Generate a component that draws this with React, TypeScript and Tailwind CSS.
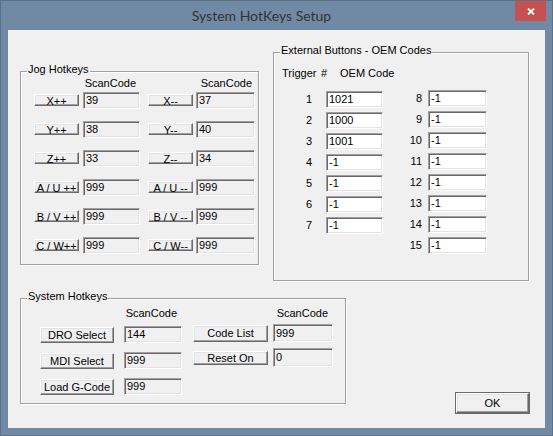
const btn =
  "box-border border border-t-white border-l-white border-r-[#696969] border-b-[#696969] bg-[#f0f0f0] shadow-[inset_-1px_-1px_0_#a0a0a0,inset_1px_1px_0_#e3e3e3] text-[11px] text-black overflow-hidden";
const edit =
  "box-border border border-t-[#a0a0a0] border-l-[#a0a0a0] border-r-white border-b-white shadow-[inset_1px_1px_0_#696969,inset_-1px_-1px_0_#e3e3e3] text-[11px] leading-[13px] text-black pl-[2px] flex items-center";

const jogRows = [
  ["X++", "39", "X--", "37"],
  ["Y++", "38", "Y--", "40"],
  ["Z++", "33", "Z--", "34"],
  ["A / U ++", "999", "A / U --", "999"],
  ["B / V ++", "999", "B / V --", "999"],
  ["C / W++", "999", "C / W--", "999"],
];

const oemLeft = [
  ["1", "1021"],
  ["2", "1000"],
  ["3", "1001"],
  ["4", "-1"],
  ["5", "-1"],
  ["6", "-1"],
  ["7", "-1"],
];

const oemRight = [
  ["8", "-1"],
  ["9", "-1"],
  ["10", "-1"],
  ["11", "-1"],
  ["12", "-1"],
  ["13", "-1"],
  ["14", "-1"],
  ["15", "-1"],
];

function GroupBox({
  title,
  className,
  children,
}: {
  title: string;
  className: string;
  children: React.ReactNode;
}) {
  return (
    <div
      className={`relative box-border border border-[#a0a0a0] shadow-[inset_1px_1px_0_#fff,1px_1px_0_#fff] ${className}`}
    >
      {/* Group caption sits on the top line */}
      <span className="absolute -top-[9px] left-[6px] bg-[#f0f0f0] px-[1px] text-[11px] leading-[13px] whitespace-nowrap">
        {title}
      </span>
      {children}
    </div>
  );
}

export default function App() {
  return (
    <div className="box-border flex h-[436px] w-[553px] flex-col border border-[#5b7088] bg-[#7089a4] font-['Liberation_Sans',Arial,sans-serif] text-black">
      {/* Title bar */}
      <div className="flex h-[29px] items-start">
        <div className="flex flex-1 justify-center pl-[7px] pt-[5px] font-['Lato','Noto_Sans',sans-serif] text-[14px] leading-[20px] text-[#333]">
          System HotKeys Setup
        </div>
        <div className="mr-[6px] flex h-[20px] w-[31px] items-center justify-center bg-[#c75050]">
          <svg width="8" height="7" viewBox="0 0 8 7">
            <path d="M1 0.5 L7 6.5 M7 0.5 L1 6.5" stroke="#fff" strokeWidth="1.8" />
          </svg>
        </div>
      </div>

      {/* Client area */}
      <div className="mx-[7px] flex h-[398px] w-[537px] flex-col bg-[#f0f0f0] pl-[12px] pt-[22px] text-[11px] leading-[13px]">
        <div className="flex items-start">
          {/* Jog hotkeys */}
          <GroupBox title="Jog Hotkeys" className="mt-[19px] h-[194px] w-[239px]">
            <div className="flex pl-[13px] pt-[5px]">
              <div className="w-[106px] pr-[4px] text-right">ScanCode</div>
              <div className="ml-[8px] w-[107px] pr-[3px] text-right">ScanCode</div>
            </div>
            <div className="mt-[2px] flex flex-col gap-[12px] pl-[13px]">
              {jogRows.map((r) => (
                <div key={r[0]} className="flex h-[17px] items-start">
                  <div className={`${btn} mt-[2px] h-[12px] w-[45px] text-center leading-[12px] whitespace-nowrap`}>
                    {r[0]}
                  </div>
                  <div className={`${edit} ml-[4px] h-[17px] w-[57px] bg-[#f0f0f0]`}>{r[1]}</div>
                  <div className={`${btn} ml-[8px] mt-[2px] h-[12px] w-[45px] text-center leading-[12px] whitespace-nowrap`}>
                    {r[2]}
                  </div>
                  <div className={`${edit} ml-[3px] h-[17px] w-[59px] bg-[#f0f0f0]`}>{r[3]}</div>
                </div>
              ))}
            </div>
          </GroupBox>

          {/* External buttons */}
          <GroupBox title="External Buttons - OEM Codes" className="ml-[14px] h-[229px] w-[256px]">
            <div className="flex pl-[8px] pt-[14px]">
              <span className="w-[39px]">Trigger</span>
              <span className="w-[19px]">#</span>
              <span>OEM Code</span>
            </div>
            <div className="mt-[10px] flex items-start">
              <div className="mt-[1px] flex flex-col gap-[4px]">
                {oemLeft.map(([n, v]) => (
                  <div key={n} className="flex h-[17px] items-center">
                    <span className="w-[38px] text-right">{n}</span>
                    <div className={`${edit} ml-[14px] h-[17px] w-[57px] bg-white`}>{v}</div>
                  </div>
                ))}
              </div>
              <div className="ml-[9px] flex flex-col gap-[4px]">
                {oemRight.map(([n, v]) => (
                  <div key={n} className="flex h-[17px] items-center">
                    <span className="w-[30px] text-right">{n}</span>
                    <div className={`${edit} ml-[6px] h-[17px] w-[59px] bg-white`}>{v}</div>
                  </div>
                ))}
              </div>
            </div>
          </GroupBox>
        </div>

        <div className="mt-[17px] flex items-start">
          {/* System hotkeys */}
          <GroupBox title="System Hotkeys" className="h-[106px] w-[326px]">
            <div className="flex">
              <div className="ml-[19px] pt-[8px]">
                <div className="w-[142px] pr-[5px] text-right">ScanCode</div>
                <div className="mt-[6px] flex flex-col gap-[9px]">
                  {[
                    ["DRO Select", "144"],
                    ["MDI Select", "999"],
                    ["Load G-Code", "999"],
                  ].map(([label, v]) => (
                    <div key={label} className="flex h-[17px] items-start">
                      <div className={`${btn} mt-[1px] flex h-[16px] w-[74px] items-center justify-center whitespace-nowrap`}>
                        {label}
                      </div>
                      <div className={`${edit} ml-[10px] h-[17px] w-[58px] bg-[#f0f0f0]`}>{v}</div>
                    </div>
                  ))}
                </div>
              </div>
              <div className="ml-[11px] pt-[8px]">
                <div className="w-[140px] pr-[5px] text-right">ScanCode</div>
                <div className="mt-[4px] flex h-[18px] items-start">
                  <div className={`${btn} mt-[1px] flex h-[17px] w-[75px] items-center justify-center`}>Code List</div>
                  <div className={`${edit} ml-[5px] h-[18px] w-[60px] bg-[#f0f0f0]`}>999</div>
                </div>
                <div className="mt-[6px] flex h-[19px] items-start">
                  <div className={`${btn} mt-[3px] flex h-[14px] w-[75px] items-center justify-center`}>Reset On</div>
                  <div className={`${edit} ml-[5px] h-[19px] w-[60px] bg-[#f0f0f0]`}>0</div>
                </div>
              </div>
            </div>
          </GroupBox>

          {/* OK button */}
          <div className="ml-[109px] mt-[94px] box-border h-[22px] w-[75px] border border-[#6b6b6b]">
            <div className={`${btn} flex h-full w-full items-center justify-center`}>OK</div>
          </div>
        </div>
      </div>
    </div>
  );
}
